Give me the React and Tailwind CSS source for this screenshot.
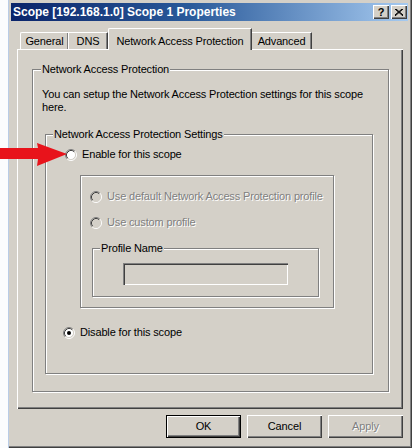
import React from "react";

function Radio({ checked, disabled }) {
  return (
    <svg width="12" height="12" viewBox="0 0 12 12" className="shrink-0">
      <circle cx="6" cy="6" r="4.5" fill={disabled ? "#d4d0c8" : "#ffffff"} />
      <path d="M2.11 9.89 A5.5 5.5 0 0 1 9.89 2.11" stroke="#808080" fill="none" />
      <path d="M9.89 2.11 A5.5 5.5 0 0 1 2.11 9.89" stroke="#ffffff" fill="none" />
      <path d="M2.82 9.18 A4.5 4.5 0 0 1 9.18 2.82" stroke="#404040" fill="none" />
      <path d="M9.18 2.82 A4.5 4.5 0 0 1 2.82 9.18" stroke="#d4d0c8" fill="none" />
      {checked && <circle cx="6" cy="6" r="2" fill="#000000" />}
    </svg>
  );
}

function Group({ label, className, labelClass, children }) {
  return (
    <div
      className={
        "relative border border-[#808080] shadow-[inset_1px_1px_0_#ffffff,1px_1px_0_#ffffff] " +
        className
      }
    >
      {label && (
        <span
          className={
            "absolute top-[-7px] bg-[#d4d0c8] px-[1px] leading-[13px] whitespace-nowrap " +
            labelClass
          }
        >
          {label}
        </span>
      )}
      {children}
    </div>
  );
}

function DisabledText({ children }) {
  return (
    <span className="text-[#808080] [text-shadow:1px_1px_0_#ffffff] leading-[13px] whitespace-nowrap">
      {children}
    </span>
  );
}

function Button({ children, isDefault, disabled }) {
  return (
    <div
      className={
        "w-[75px] h-[23px] flex items-center justify-center bg-[#d4d0c8] " +
        (isDefault
          ? "border border-black shadow-[inset_1px_1px_0_#ffffff,inset_-1px_-1px_0_#404040,inset_-2px_-2px_0_#808080]"
          : "shadow-[inset_1px_1px_0_#ffffff,inset_-1px_-1px_0_#404040,inset_-2px_-2px_0_#808080]")
      }
    >
      {disabled ? <DisabledText>{children}</DisabledText> : <span>{children}</span>}
    </div>
  );
}

function TitleButton({ children }) {
  return (
    <div className="w-[16px] h-[14px] flex items-center justify-center bg-[#d4d0c8] shadow-[inset_1px_1px_0_#ffffff,inset_-1px_-1px_0_#404040,inset_-2px_-2px_0_#808080]">
      {children}
    </div>
  );
}

export default function App() {
  return (
    <div className="relative w-[412px] h-[448px] flex bg-[#fbfcfd] text-[11px] tracking-[-0.15px] text-black font-['Liberation_Sans',Arial,sans-serif] overflow-hidden">
      <div className="w-[8px] shrink-0" />
      <div className="w-[404px] h-[448px] flex flex-col bg-[#d4d0c8] border-l border-[#b9cce6] pt-[3px] pl-[2px] pr-[4px] shadow-[inset_-1px_-1px_0_#404040,inset_-2px_-2px_0_#808080]">
        {/* Title bar */}
        <div className="h-[18px] flex items-center justify-between pl-[2px] pr-[1px] bg-[linear-gradient(to_right,#0a246a,#2a5a9a_45%,#a6caf0)]">
          <span className="text-white font-bold text-[12px] tracking-normal leading-[14px] whitespace-nowrap">
            Scope [192.168.1.0] Scope 1 Properties
          </span>
          <div className="flex gap-[2px]">
            <TitleButton>
              <span className="font-bold text-[11px] leading-[11px] mt-[1px]">?</span>
            </TitleButton>
            <TitleButton>
              <svg width="8" height="7" viewBox="0 0 8 7">
                <path d="M0 0 L8 7 M1 0 L8 6 M8 0 L0 7 M7 0 L0 6" stroke="#000" strokeWidth="1" fill="none" />
              </svg>
            </TitleButton>
          </div>
        </div>

        {/* Tabs */}
        <div className="mt-[7px] ml-[6px] h-[21px] flex items-end">
          <div className="ml-[3px] w-[48px] h-[17px] flex items-center justify-center border-l border-t border-white rounded-tl-[2px] shadow-[inset_-1px_0_0_#808080]">
            General
          </div>
          <div className="w-[40px] h-[17px] flex items-center justify-center border-l border-t border-white border-r border-r-[#404040] shadow-[inset_-1px_0_0_#808080]">
            DNS
          </div>
          <div className="relative z-10 -mb-[1px] w-[144px] h-[22px] flex items-start justify-center pt-[4px] bg-[#d4d0c8] border-l border-t border-white border-r border-r-[#404040] rounded-tl-[2px] shadow-[inset_-1px_0_0_#808080]">
            Network Access Protection
          </div>
          <div className="w-[60px] h-[17px] flex items-center justify-center border-t border-white border-r border-r-[#404040] shadow-[inset_-1px_0_0_#808080]">
            Advanced
          </div>
        </div>

        {/* Panel */}
        <div className="ml-[6px] w-[386px] h-[360px] pt-[20px] pl-[15px] shadow-[inset_1px_1px_0_#ffffff,inset_-1px_-1px_0_#404040,inset_-2px_-2px_0_#808080]">
          <Group
            label="Network Access Protection"
            labelClass="left-[8px]"
            className="w-[357px] h-[323px] pt-[18px] pl-[9px] flex flex-col items-start"
          >
            <p className="leading-[13px]">
              You can setup the Network Access Protection settings for this scope
              <br />
              here.
            </p>
            <Group
              label="Network Access Protection Settings"
              labelClass="left-[7px]"
              className="mt-[20px] ml-[3px] w-[328px] h-[240px] flex flex-col items-start"
            >
              <div className="mt-[13px] ml-[19px] h-[13px] flex items-center gap-[5px]">
                <Radio />
                <span className="leading-[13px]">Enable for this scope</span>
              </div>
              <Group className="mt-[14px] ml-[34px] w-[254px] h-[133px] flex flex-col items-start">
                <div className="mt-[14px] ml-[9px] h-[13px] flex items-center gap-[5px]">
                  <Radio disabled />
                  <DisabledText>Use default Network Access Protection profile</DisabledText>
                </div>
                <div className="mt-[13px] ml-[9px] h-[13px] flex items-center gap-[5px]">
                  <Radio disabled />
                  <DisabledText>Use custom profile</DisabledText>
                </div>
                <Group
                  label="Profile Name"
                  labelClass="left-[7px]"
                  className="mt-[19px] ml-[11px] w-[227px] h-[49px] flex flex-col items-start"
                >
                  <div className="mt-[14px] ml-[30px] w-[165px] h-[22px] bg-[#d4d0c8] shadow-[inset_1px_1px_0_#808080,inset_2px_2px_0_#404040,inset_-1px_-1px_0_#ffffff,inset_-2px_-2px_0_#d4d0c8]" />
                </Group>
              </Group>
              <div className="mt-[18px] ml-[17px] h-[13px] flex items-center gap-[5px]">
                <Radio checked />
                <span className="leading-[13px]">Disable for this scope</span>
              </div>
            </Group>
          </Group>
        </div>

        {/* Buttons */}
        <div className="mt-[6px] ml-[6px] w-[386px] flex justify-end gap-[6px]">
          <Button isDefault>OK</Button>
          <Button>Cancel</Button>
          <Button disabled>Apply</Button>
        </div>
      </div>

      {/* Red annotation arrow */}
      <svg
        className="absolute left-0 top-[140px]"
        width="70"
        height="30"
        viewBox="0 0 70 30"
      >
        <polygon
          points="0,8 38,8 37,3 67,14 37,26 38,19 0,19"
          fill="#e8131b"
        />
      </svg>
    </div>
  );
}
